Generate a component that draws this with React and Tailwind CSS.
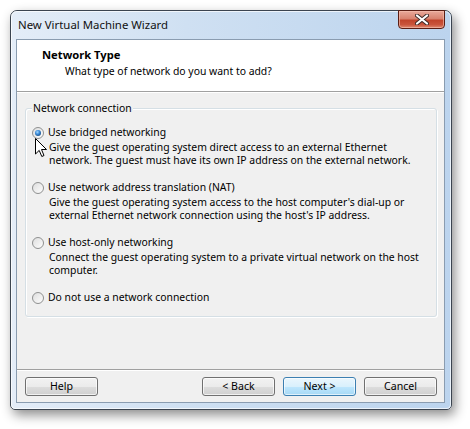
import React from "react";

const font = { fontFamily: '"Noto Sans", "Segoe UI", sans-serif' };

function Radio({ checked, id }) {
  return (
    <svg width="12" height="12" viewBox="0 0 12 12" className="shrink-0">
      <defs>
        <linearGradient id={`rg-${id}`} x1="0" y1="0" x2="1" y2="1">
          <stop offset="0" stopColor="#dcdcdc" />
          <stop offset="1" stopColor="#ffffff" />
        </linearGradient>
        <radialGradient id={`rd-${id}`} cx="0.4" cy="0.35" r="0.7">
          <stop offset="0" stopColor="#a6dbff" />
          <stop offset="0.5" stopColor="#3a8ad8" />
          <stop offset="1" stopColor="#1b4f86" />
        </radialGradient>
      </defs>
      <circle cx="6" cy="6" r="5.5" fill={`url(#rg-${id})`} stroke="#8e8f8f" strokeWidth="1" />
      {checked && <circle cx="6" cy="6" r="3" fill={`url(#rd-${id})`} />}
    </svg>
  );
}

function Option({ id, checked, label, lines, first }) {
  return (
    <div className={first ? "" : "mt-[14px]"}>
      <div className="flex items-center h-[13px] leading-[13px]">
        <Radio checked={checked} id={id} />
        <span className="ml-[4px]">{label}</span>
      </div>
      {lines && (
        <div className="ml-[17px] mt-[2px]">
          {lines.map((l, i) => (
            <div key={i} className="h-[13px] leading-[13px] whitespace-nowrap">
              {l}
            </div>
          ))}
        </div>
      )}
    </div>
  );
}

function Button({ children, primary }) {
  return (
    <div
      className={
        "w-[73px] h-[19px] rounded-[3px] border flex items-center justify-center leading-none text-[10.6px] " +
        (primary
          ? "border-[#3c7fb1] bg-[linear-gradient(#eaf6fd_0%,#d9f0fc_50%,#bee6fd_51%,#a7d9f5_100%)] shadow-[inset_0_0_0_1px_#ffffffa0]"
          : "border-[#707070] bg-[linear-gradient(#f2f2f2_0%,#ebebeb_50%,#dddddd_51%,#cfcfcf_100%)] shadow-[inset_0_0_0_1px_#ffffffb0]")
      }
    >
      {children}
    </div>
  );
}

export default function App() {
  return (
    <div className="w-[470px] h-[429px] bg-white pl-[10px] pt-[10px] relative text-black" style={font}>
      <div className="w-[442px] h-[400px] rounded-t-[7px] rounded-b-[5px] border border-[#3b4450] bg-[linear-gradient(90deg,#e4edf8_0%,#cfe0f2_40%,#bcd4ee_100%)] shadow-[3px_5px_12px_rgba(0,0,0,0.45)] flex flex-col relative">
        <div className="absolute inset-0 rounded-t-[6px] rounded-b-[4px] border border-[#ffffffb0] pointer-events-none" />
        {/* title bar */}
        <div className="h-[28px] flex items-start relative">
          <div className="pl-[7px] pt-[7px] text-[11.4px] leading-[14px] text-[#111]">New Virtual Machine Wizard</div>
          <div className="ml-auto mr-[6px] mt-[-1px] w-[47px] h-[19px] rounded-b-[4px] border border-[#5a1d14] bg-[linear-gradient(#e9a99b_0%,#d8826f_45%,#c1442c_55%,#c9543c_80%,#e08a72_100%)] shadow-[inset_0_0_0_1px_#f5c0b0a0] flex items-center justify-center">
            <svg width="14" height="11" viewBox="0 0 14 11">
              <path d="M2 1.5 L12 9.5 M12 1.5 L2 9.5" stroke="#3b2a28" strokeWidth="4" strokeLinecap="round" />
              <path d="M2 1.5 L12 9.5 M12 1.5 L2 9.5" stroke="#ffffff" strokeWidth="2.2" strokeLinecap="round" />
            </svg>
          </div>
        </div>
        {/* client */}
        <div className="ml-[5px] mr-[6px] mb-[6px] flex-1 border border-[#8a9cb0] flex flex-col bg-[#f0f0f0] text-[10.4px]">
          <div className="h-[52px] bg-white border-b border-[#a0a0a0] pt-[8px]">
            <div className="pl-[25px] font-bold text-[11.2px] leading-[14px]">Network Type</div>
            <div className="pl-[48px] mt-[2px] leading-[14px]">What type of network do you want to add?</div>
          </div>
          <div className="flex-1 border-t border-white px-[8px] pt-[15px]">
            <div className="relative w-[412px] h-[209px] rounded-[3px] border border-[#d5dfe5] shadow-[inset_1px_1px_0_#ffffff,1px_1px_0_#ffffff] pt-[17px] pl-[6px]">
              <span className="absolute left-[6px] top-[-7px] bg-[#f0f0f0] px-[1px] leading-[13px]">Network connection</span>
              <Option
                id="a"
                first
                checked
                label="Use bridged networking"
                lines={[
                  "Give the guest operating system direct access to an external Ethernet",
                  "network. The guest must have its own IP address on the external network.",
                ]}
              />
              <Option
                id="b"
                label="Use network address translation (NAT)"
                lines={[
                  "Give the guest operating system access to the host computer's dial-up or",
                  "external Ethernet network connection using the host's IP address.",
                ]}
              />
              <Option
                id="c"
                label="Use host-only networking"
                lines={[
                  "Connect the guest operating system to a private virtual network on the host",
                  "computer.",
                ]}
              />
              <Option id="d" label="Do not use a network connection" />
            </div>
          </div>
          <div className="border-t border-[#a0a0a0]">
            <div className="border-t border-white h-[32px] flex items-start pt-[6px] pl-[8px] pr-[7px]">
              <Button>Help</Button>
              <div className="ml-auto flex gap-[8px]">
                <Button>&lt; Back</Button>
                <Button primary>Next &gt;</Button>
                <Button>Cancel</Button>
              </div>
            </div>
          </div>
        </div>
      </div>
      {/* mouse cursor */}
      <svg className="absolute left-[35px] top-[138px]" width="13" height="20" viewBox="0 0 13 20">
        <path d="M0.5 0.5 L0.5 16 L4.2 12.4 L6.8 18.5 L9 17.5 L6.5 11.5 L11.5 11.5 Z" fill="#ffffff" stroke="#000000" strokeWidth="1" strokeLinejoin="round" />
      </svg>
    </div>
  );
}
